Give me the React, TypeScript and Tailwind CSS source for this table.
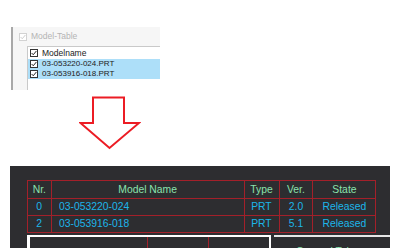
const cols = [
  { label: "Nr.", w: "w-[23px]" },
  { label: "Model Name", w: "w-[194px]" },
  { label: "Type", w: "w-[35px]" },
  { label: "Ver.", w: "w-[34px]" },
  { label: "State", w: "w-[63px]" },
];

const rows = [
  { nr: "0", name: "03-053220-024", type: "PRT", ver: "2.0", state: "Released" },
  { nr: "2", name: "03-053916-018", type: "PRT", ver: "5.1", state: "Released" },
];

const files = ["03-053220-024.PRT", "03-053916-018.PRT"];

function Check({ faded }: { faded?: boolean }) {
  return (
    <span
      className={`flex h-[8px] w-[8px] shrink-0 items-center justify-center border bg-white ${
        faded ? "border-[#d2d2d2]" : "border-[#333]"
      }`}
    >
      <svg viewBox="0 0 8 8" className="h-[6px] w-[6px]">
        <path
          d="M0.8 4 L3 6.3 L7.2 1.3"
          fill="none"
          stroke={faded ? "#c8c8c8" : "#111"}
          strokeWidth="1.2"
        />
      </svg>
    </span>
  );
}

function Narrow({ children, left }: { children: string; left?: boolean }) {
  return (
    <span className={`inline-block scale-x-[0.9] whitespace-nowrap ${left ? "origin-left" : ""}`}>
      {children}
    </span>
  );
}

function ModelTablePanel() {
  return (
    <div className="ml-[11px] mt-[27px] h-[63px] w-[149px] overflow-hidden border-l-2 border-[#a8a8a8] bg-[#f6f6f6] font-['Liberation_Sans',sans-serif] text-[8px]">
      <div className="flex h-[19px] items-center gap-[4px] pl-[6px] text-[#b4b4b4]">
        <Check faded />
        <span className="text-[8.5px]">Model-Table</span>
      </div>
      <div className="ml-[14px] h-[44px] border-l border-t border-[#c9c9c9] bg-white">
        <div className="flex h-[12px] items-center gap-[4px] pl-[2px] text-[#222]">
          <Check />
          <span className="text-[8.5px]">Modelname</span>
        </div>
        {files.map((f) => (
          <div key={f} className="flex h-[10px] items-center gap-[4px] bg-[#addff9] pl-[2px] text-[#222]">
            <Check />
            <span>{f}</span>
          </div>
        ))}
      </div>
    </div>
  );
}

function DownArrow() {
  return (
    <svg width="62" height="54" viewBox="0 0 62 54" className="ml-[79px] mt-[6px] block">
      <polygon
        points="14,1.5 45,1.5 45,27 60,27 30.5,52 1.5,27 14,27"
        fill="#fff"
        stroke="#ec1c24"
        strokeWidth="2"
      />
    </svg>
  );
}

function DrawingTable() {
  return (
    <div className="mx-[10px] mt-[16px] h-[84px] bg-[#2d2d30] pl-[17px] pt-[14px] font-['Liberation_Sans',sans-serif] text-[11.5px]">
      <div className="w-[349px] border border-[#a3202a]">
        <div className="flex h-[17px] text-[#8ae2ad]">
          {cols.map((c, i) => (
            <div
              key={c.label}
              className={`${c.w} flex items-center justify-center ${i > 0 ? "border-l border-[#a3202a]" : ""}`}
            >
              <Narrow>{c.label}</Narrow>
            </div>
          ))}
        </div>
        {rows.map((r) => (
          <div key={r.nr} className="flex h-[17px] border-t border-[#a3202a] text-[#1cb6ea]">
            <div className="flex w-[23px] items-center justify-center">
              <Narrow>{r.nr}</Narrow>
            </div>
            <div className="flex w-[194px] items-center border-l border-[#a3202a] pl-[7px]">
              <Narrow left>{r.name}</Narrow>
            </div>
            <div className="flex w-[35px] items-center justify-center border-l border-[#a3202a]">
              <Narrow>{r.type}</Narrow>
            </div>
            <div className="flex w-[34px] items-center justify-center border-l border-[#a3202a]">
              <Narrow>{r.ver}</Narrow>
            </div>
            <div className="flex w-[63px] items-center justify-center border-l border-[#a3202a]">
              <Narrow>{r.state}</Narrow>
            </div>
          </div>
        ))}
      </div>
      <div className="mt-[2px] flex gap-[3px]">
        <div className="flex h-[20px] w-[251px] border-l-[3px] border-r-2 border-t-2 border-white">
          <div className="w-[117px]" />
          <div className="w-[62px] border-l border-r border-[#a3202a]" />
        </div>
        <div className="h-[20px] w-[116px] border-t-2 border-[#e6e6e6] pl-[22px] pt-[6px] text-[#8ae2ad]">
          <Narrow left>General Tolerances</Narrow>
        </div>
      </div>
    </div>
  );
}

export default function App() {
  return (
    <div className="h-[248px] w-[400px] overflow-hidden bg-white">
      <ModelTablePanel />
      <DownArrow />
      <DrawingTable />
    </div>
  );
}
